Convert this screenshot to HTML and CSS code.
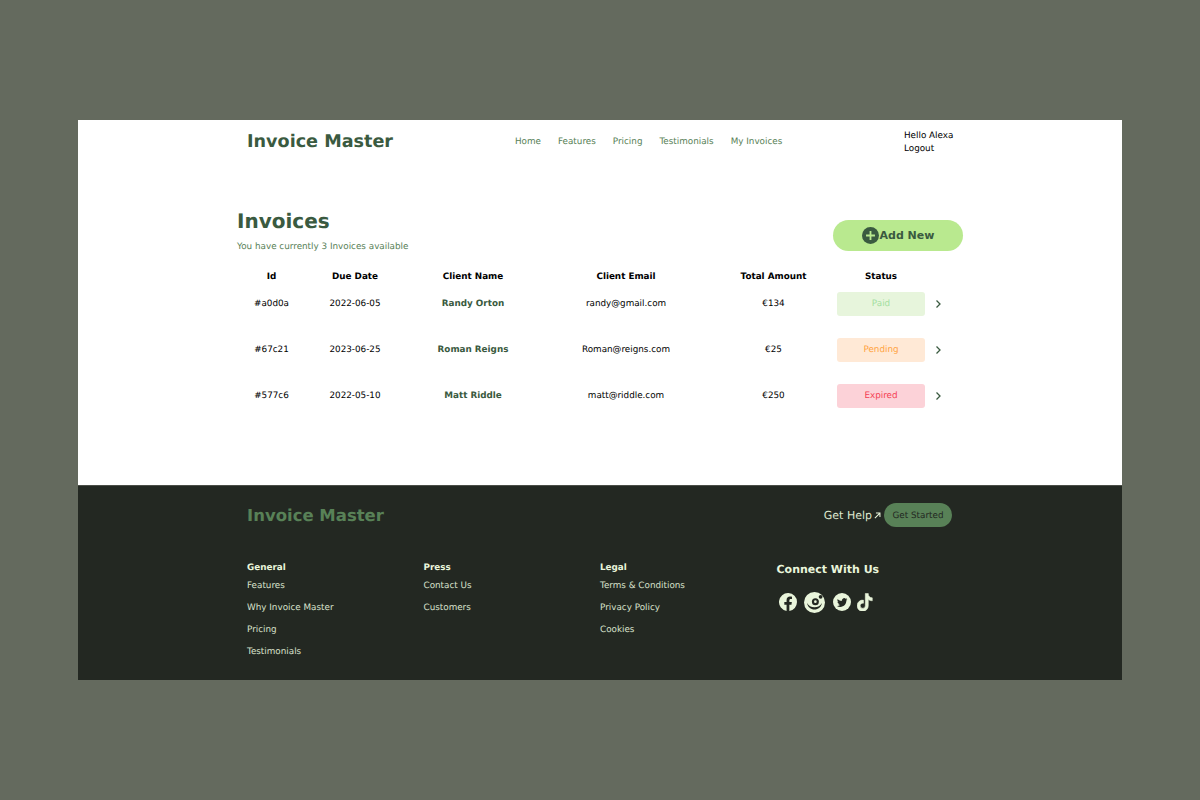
FILE: index.html
```html
<!DOCTYPE html>
<html lang="en">
<head>
    <meta charset="UTF-8">
    <meta name="viewport" content="width=device-width, initial-scale=1.0">
    <title>Invoice Master</title>
    <link rel="stylesheet" href="styles.css">
</head>
<body>
    <div class="page">
        <header class="top">
            <div class="logo">Invoice Master</div>
            <nav class="nav">
                <a href="#">Home</a>
                <a href="#">Features</a>
                <a href="#">Pricing</a>
                <a href="#">Testimonials</a>
                <a href="#">My Invoices</a>
            </nav>
            <div class="user">
                <div>Hello Alexa</div>
                <div>Logout</div>
            </div>
        </header>

        <main class="main">
            <div class="title-row">
                <div>
                    <h1>Invoices</h1>
                    <p>You have currently 3 Invoices available</p>
                </div>
                <button class="add-btn">
                    <svg class="add-icon" viewBox="0 0 16 16">
                        <circle cx="8" cy="8" r="8" fill="#3a5a40"/>
                        <path d="M8 3.800v8.400M3.800 8h8.400" stroke="#b9e98f" stroke-width="1.700"/>
                    </svg>
                    Add New
                </button>
            </div>

            <div class="row head">
                <div>Id</div>
                <div>Due Date</div>
                <div>Client Name</div>
                <div>Client Email</div>
                <div>Total Amount</div>
                <div>Status</div>
                <div></div>
            </div>
            <div class="row">
                <div>#a0d0a</div>
                <div>2022-06-05</div>
                <div class="client">Randy Orton</div>
                <div>randy@gmail.com</div>
                <div>€134</div>
                <div class="status paid">Paid</div>
                <svg class="arrow" viewBox="0 0 8 10"><path d="M2.500 1.500 6 5 2.500 8.500" fill="none" stroke="#3a5a40" stroke-width="1.300"/></svg>
            </div>
            <div class="row">
                <div>#67c21</div>
                <div>2023-06-25</div>
                <div class="client">Roman Reigns</div>
                <div>Roman@reigns.com</div>
                <div>€25</div>
                <div class="status pending">Pending</div>
                <svg class="arrow" viewBox="0 0 8 10"><path d="M2.500 1.500 6 5 2.500 8.500" fill="none" stroke="#3a5a40" stroke-width="1.300"/></svg>
            </div>
            <div class="row">
                <div>#577c6</div>
                <div>2022-05-10</div>
                <div class="client">Matt Riddle</div>
                <div>matt@riddle.com</div>
                <div>€250</div>
                <div class="status expired">Expired</div>
                <svg class="arrow" viewBox="0 0 8 10"><path d="M2.500 1.500 6 5 2.500 8.500" fill="none" stroke="#3a5a40" stroke-width="1.300"/></svg>
            </div>
        </main>

        <footer class="footer">
            <div class="footer-top">
                <div class="footer-logo">Invoice Master</div>
                <div class="footer-actions">
                    <a class="help" href="#">Get Help
                        <svg class="help-icon" viewBox="0 0 8 8"><path d="M1 7 6.500 1.500M2.200 1.200h4.600v4.600" fill="none" stroke="#e9f5db" stroke-width="1.200"/></svg>
                    </a>
                    <a class="started" href="#">Get Started</a>
                </div>
            </div>
            <div class="footer-cols">
                <div class="col">
                    <h4>General</h4>
                    <a href="#">Features</a>
                    <a href="#">Why Invoice Master</a>
                    <a href="#">Pricing</a>
                    <a href="#">Testimonials</a>
                </div>
                <div class="col">
                    <h4>Press</h4>
                    <a href="#">Contact Us</a>
                    <a href="#">Customers</a>
                </div>
                <div class="col">
                    <h4>Legal</h4>
                    <a href="#">Terms &amp; Conditions</a>
                    <a href="#">Privacy Policy</a>
                    <a href="#">Cookies</a>
                </div>
                <div class="connect">
                    <h3>Connect With Us</h3>
                    <div class="socials">
                        <svg class="fb" viewBox="0 0 24 24"><path fill="#e9f5db" d="M24 12a12 12 0 1 0-13.900 11.900v-8.400H7.100V12h3V9.400c0-3 1.800-4.700 4.500-4.700 1.300 0 2.700.2 2.700.2v3h-1.500c-1.500 0-2 .9-2 1.900V12h3.300l-.5 3.500h-2.800v8.400A12 12 0 0 0 24 12z"/></svg>
                        <svg class="rd" viewBox="0 0 24 24">
                            <circle cx="12" cy="12" r="12" fill="#e9f5db"/>
                            <path d="M3.500 12.500c.8 4.700 4.300 7.500 8.500 7.500s7.700-2.800 8.500-7.500c-1.500 3-4.800 5-8.500 5s-7-2-8.500-5z" fill="#232822"/>
                            <circle cx="13" cy="11" r="4" fill="#232822"/>
                            <circle cx="13" cy="11" r="1.500" fill="#e9f5db"/>
                            <circle cx="19" cy="5.500" r="2.200" fill="#232822"/>
                        </svg>
                        <svg class="tw" viewBox="0 0 24 24">
                            <circle cx="12" cy="12" r="12" fill="#e9f5db"/>
                            <path fill="#232822" d="M19 8.200c-.5.2-1 .4-1.600.4.600-.3 1-.9 1.200-1.500-.5.300-1.100.6-1.800.7a2.800 2.800 0 0 0-4.800 2.500C9.700 10.700 7.600 9.600 6.200 7.900a2.800 2.800 0 0 0 .9 3.700c-.5 0-.9-.1-1.300-.3 0 1.400 1 2.500 2.300 2.800-.4.100-.8.100-1.300 0 .4 1.100 1.400 1.900 2.600 1.900-1.200.9-2.700 1.300-4.200 1.200 1.300.8 2.800 1.300 4.400 1.300 5.300 0 8.200-4.400 8.200-8.200v-.4c.6-.4 1.100-.9 1.200-1.700z"/>
                        </svg>
                        <svg class="tk" viewBox="2.500 .5 20 23"><path fill="#e9f5db" stroke="#e9f5db" stroke-width=".7" d="M16.600 1h-3.700v15.300a3.200 3.200 0 1 1-3.200-3.200c.3 0 .6 0 .9.100V9.400a7 7 0 1 0 6 6.900V8.600a8.500 8.500 0 0 0 5 1.600V6.500a5 5 0 0 1-5-5.500z"/></svg>
                    </div>
                </div>
            </div>
        </footer>
    </div>
</body>
</html>
```
FILE: styles.css
```css
* {
    box-sizing: border-box;
}
body {
    margin: 0;
    height: 800px;
    padding: 120px 78px;
    background-color: #646a5e;
    font-family: "DejaVu Sans", sans-serif;
    font-size: 8.800px;
    color: #000;
    overflow: hidden;
    text-rendering: geometricPrecision;
}
a {
    color: inherit;
    text-decoration: none;
}
.page {
    height: 560px;
    background: #fff;
    display: flex;
    flex-direction: column;
}
.top {
    width: 726px;
    margin: 0 auto;
    height: 42px;
    padding: 0 10px;
    display: grid;
    grid-template-columns: 268px 389px auto;
    align-items: center;
}
.logo {
    font-size: 17.600px;
    font-weight: bold;
    padding-top: 2px;
    color: #3a5a40;
}
.nav {
    display: flex;
    gap: 17px;
    padding-top: 2px;
    color: #588157;
}
.user {
    line-height: 13px;
    padding-top: 3px;
    white-space: nowrap;
}
.main {
    flex: 1;
    width: 726px;
    margin: 0 auto;
    padding-top: 47px;
}
.title-row {
    display: flex;
    justify-content: space-between;
    align-items: flex-end;
    margin-bottom: 17px;
}
h1 {
    margin: 0 0 8px;
    font-size: 20px;
    line-height: 25px;
    color: #3a5a40;
}
.title-row p {
    margin: 0;
    line-height: 11px;
    color: #588157;
}
.add-btn {
    width: 130px;
    height: 31px;
    border: none;
    border-radius: 16px;
    background: #b9e98f;
    color: #3a5a40;
    font-family: inherit;
    font-size: 11px;
    font-weight: bold;
    display: flex;
    align-items: center;
    justify-content: center;
    gap: 1px;
    margin-bottom: 2px;
}
.add-icon {
    width: 17px;
    height: 17px;
}
.row {
    display: grid;
    grid-template-columns: 69px 98px 138px 168px 127px 88px 25px;
    align-items: center;
    height: 24px;
    margin-bottom: 22.200px;
    text-align: center;
}
.head {
    height: 14px;
    margin-bottom: 7.800px;
    font-weight: bold;
}
.client {
    font-weight: bold;
    color: #3a5a40;
}
.status {
    height: 24px;
    line-height: 24px;
    border-radius: 3px;
}
.paid {
    background: #e7f5dc;
    color: #a3dfa0;
}
.pending {
    background: #ffe9d6;
    color: #ffa443;
}
.expired {
    background: #fcd2d8;
    color: #f43f54;
}
.arrow {
    width: 8px;
    height: 10px;
    margin-left: 9px;
}
.footer {
    height: 195px;
    background: #232822;
    padding: 0 calc((100% - 706px) / 2);
    border-top: 1px solid #4a4e47;
}
.footer-top {
    display: flex;
    justify-content: space-between;
    align-items: center;
    padding-top: 17px;
    height: 41px;
}
.footer-logo {
    font-size: 16.500px;
    font-weight: bold;
    color: #588157;
}
.footer-actions {
    display: flex;
    align-items: center;
    margin-right: 1px;
}
.help {
    display: flex;
    align-items: center;
    gap: 2px;
    margin-right: 3px;
    font-size: 11px;
    color: #dde7cf;
}
.help-icon {
    width: 7px;
    height: 7px;
}
.started {
    width: 68px;
    height: 24px;
    line-height: 24px;
    padding-top: 1px;
    border-radius: 12px;
    text-align: center;
    background: #588157;
    color: #232822;
}
.footer-cols {
    display: grid;
    grid-template-columns: 176.500px 176.500px 176.500px auto;
    margin-top: 35px;
}
.col {
    display: flex;
    flex-direction: column;
    color: #d8e0cb;
}
.col h4 {
    margin: 0;
    height: 12px;
    line-height: 12px;
    font-size: 8.800px;
    color: #e9f5db;
}
.col a {
    height: 22px;
    line-height: 22px;
}
.col h4 + a {
    margin-top: 1px;
}
.connect h3 {
    margin: 0;
    font-size: 11px;
    line-height: 16px;
    color: #e9f5db;
}
.socials {
    display: flex;
    align-items: center;
    margin-top: 13.500px;
    padding-left: 2px;
}
.fb, .tw {
    width: 18px;
    height: 18px;
}
.rd {
    width: 21px;
    height: 21px;
    margin: 0 8px 0 7px;
}
.tk {
    width: 16px;
    height: 18.500px;
    margin-left: 6px;
}
```
